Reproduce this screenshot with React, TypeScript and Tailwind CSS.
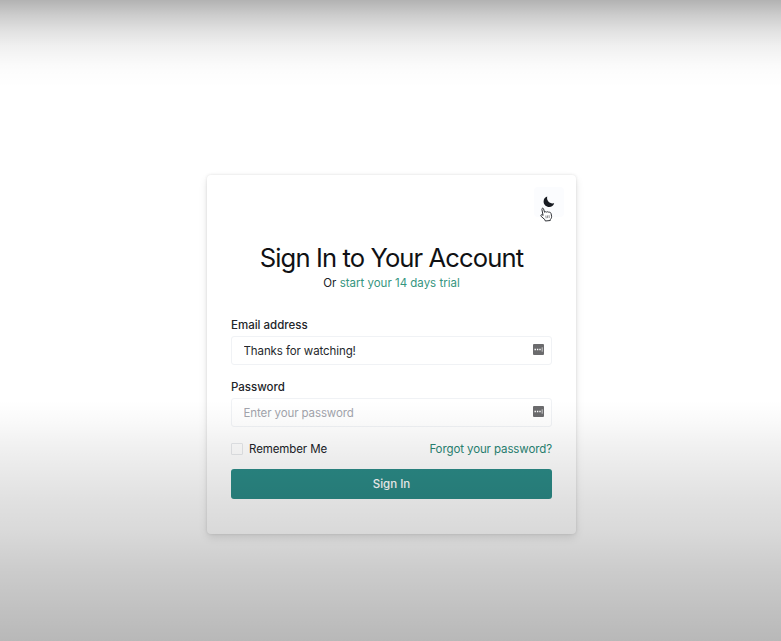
import React from "react";

function PasswordManagerIcon() {
  return (
    <svg width="11" height="11" viewBox="0 0 11 11" className="-mt-[3px] shrink-0">
      <rect width="11" height="11" rx="1" fill="#6b6b6d" />
      <path d="M1.5 5.5h1.4M3.9 5.5h1.4M6.3 5.5h1.4" stroke="#fff" strokeWidth="1.3" />
      <path d="M9.2 3.3v4.4" stroke="#e5e5e5" strokeWidth=".8" />
    </svg>
  );
}

function Field({ label, type, value, placeholder }: { label: string; type: string; value?: string; placeholder?: string }) {
  return (
    <label className="block">
      <span className="block h-[18px] text-[11.5px] leading-[20px] font-medium text-[#222529]">{label}</span>
      <span className="mt-[3px] flex h-[29px] items-center rounded-[3px] border border-[#f0f2f5] pr-[7px] pl-[11.5px]">
        <input
          type={type}
          defaultValue={value}
          placeholder={placeholder}
          className="min-w-0 flex-1 bg-transparent pt-px text-[11.5px] leading-[18px] tracking-[-0.1px] text-[#25282c] outline-none placeholder:text-[#a2a4ac]"
        />
        <PasswordManagerIcon />
      </span>
    </label>
  );
}

export default function App() {
  return (
    <div className="relative flex h-[641px] w-[781px] justify-center overflow-hidden bg-white pt-[175px] pl-[2px] font-['Inter','Liberation_Sans',sans-serif] text-[#202328]">
      <main className="h-[359px] w-[369px] rounded-[4px] bg-white px-6 pt-3 shadow-[0_0_3px_rgba(0,0,0,0.12),0_4px_8px_rgba(0,0,0,0.1)]">
        <div className="flex justify-end">
          <button aria-label="Toggle color mode" className="relative -mr-3 flex h-[30px] w-[30px] items-center justify-center rounded-[4px] bg-[#fbfcfe]">
            <svg width="12" height="12" viewBox="0 0 12 12" className="-mt-[1px]">
              <path d="M4.2.6C3.4 4.9 6.4 8.1 11.2 7.3C10.3 9.8 8.6 11.1 6.3 11.1C3.1 11.1.6 8.7.6 5.6C.6 3.2 2 1.3 4.2.6Z" fill="#171a20" />
            </svg>
            <svg width="13" height="15" viewBox="0 0 13 15" className="absolute top-[20px] left-[6px]">
              <path d="M3.1 8.5L1.9 2.4C1.7 1 3.2.7 3.6 2L4.6 5.3C5.2 4.5 6.2 4.5 6.7 5.2C7.4 4.5 8.3 4.7 8.8 5.4C9.8 4.9 10.7 5.4 11 6.4L11.6 9.2C11.8 10.7 11.1 11.7 10.4 12.4L10.3 13.5L5.3 14L4.9 12.7L1.1 9.3C.3 8.2 1.5 7.2 2.4 7.9Z" fill="#fff" stroke="#33353a" strokeWidth="1" strokeLinejoin="round" />
              <path d="M5.8 8.6l.4 2.7M7.4 8.4l.3 2.7M9 8.2l.3 2.7" stroke="#56585c" strokeWidth=".65" />
            </svg>
          </button>
        </div>
        <header className="mt-[25px] text-center">
          <h1 className="h-[32px] text-[25.6px] leading-[32px] font-normal tracking-[-0.9px] whitespace-nowrap text-[#101114]">Sign In to Your Account</h1>
          <p className="h-[18px] text-[11.5px] leading-[19px]">
            Or <a href="#" className="text-[#359580]">start your 14 days trial</a>
          </p>
        </header>
        <form className="mt-[23px]" onSubmit={(e) => e.preventDefault()}>
          <Field label="Email address" type="text" value="Thanks for watching!" />
          <div className="mt-3">
            <Field label="Password" type="password" placeholder="Enter your password" />
          </div>
          <div className="mt-3 flex h-[18px] items-center justify-between pt-px text-[11.5px] leading-[18px] tracking-[-0.1px]">
            <label className="flex items-center gap-[6px]">
              <input type="checkbox" className="h-[12px] w-[12px] appearance-none rounded-[1px] border border-[#e6e8eb]" />
              <span>Remember Me</span>
            </label>
            <a href="#" className="text-[#298574]">Forgot your password?</a>
          </div>
          <button className="mt-3 block h-[30px] w-full rounded-[3px] bg-[#2b8b87] pt-[2px] text-[11.5px] font-medium text-white">Sign In</button>
        </form>
      </main>
      <div className="pointer-events-none absolute inset-x-0 top-0 h-[90px] bg-[linear-gradient(to_bottom,rgba(0,0,0,.30)_0px,rgba(0,0,0,.20)_15px,rgba(0,0,0,.12)_30px,rgba(0,0,0,.06)_46px,rgba(0,0,0,.015)_66px,transparent_88px)]" />
      <div className="pointer-events-none absolute inset-x-0 bottom-0 h-[241px] bg-[linear-gradient(to_bottom,transparent_0px,rgba(0,0,0,.025)_23px,rgba(0,0,0,.06)_48px,rgba(0,0,0,.12)_102px,rgba(0,0,0,.15)_132px,rgba(0,0,0,.2)_169px,rgba(0,0,0,.28)_241px)]" />
    </div>
  );
}
